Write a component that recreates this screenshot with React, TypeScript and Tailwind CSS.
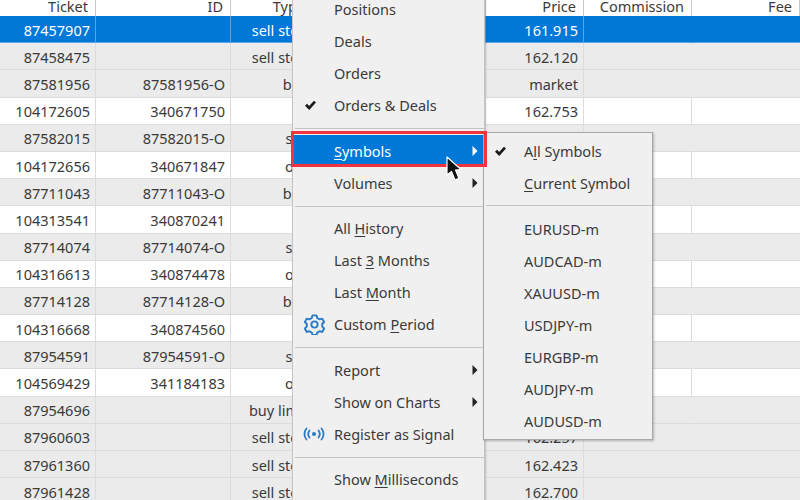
const rows = [
  ["87457907", "", "sell stop", "161.915"],
  ["87458475", "", "sell stop", "162.120"],
  ["87581956", "87581956-O", "buy", "market"],
  ["104172605", "340671750", "in", "162.753"],
  ["87582015", "87582015-O", "sell", ""],
  ["104172656", "340671847", "out", ""],
  ["87711043", "87711043-O", "buy", ""],
  ["104313541", "340870241", "in", ""],
  ["87714074", "87714074-O", "sell", ""],
  ["104316613", "340874478", "out", ""],
  ["87714128", "87714128-O", "buy", ""],
  ["104316668", "340874560", "in", ""],
  ["87954591", "87954591-O", "sell", ""],
  ["104569429", "341184183", "out", ""],
  ["87954696", "", "buy limit", ""],
  ["87960603", "", "sell stop", "162.257"],
  ["87961360", "", "sell stop", "162.423"],
  ["87961428", "", "sell stop", "162.700"],
];

const cols = "grid grid-cols-[96px_135px_82px_1fr_98px_108px_108px]";

function Check() {
  return (
    <svg width="11" height="10" viewBox="0 0 11 10" className="text-[#1c1c1c] -ml-[8px]">
      <path d="M1 4.800 L4.200 8 L10 1.600" fill="none" stroke="currentColor" strokeWidth="2.800" />
    </svg>
  );
}

function Arrow({ white }: { white?: boolean }) {
  return (
    <svg width="6" height="10" viewBox="0 0 6 10" className={white ? "text-white" : "text-[#222]"}>
      <path d="M0.500 0 L5.500 5 L0.500 10 Z" fill="currentColor" />
    </svg>
  );
}

function Gear() {
  return (
    <svg width="21" height="21" viewBox="0 0 24 24" fill="none" stroke="#2a7cc7" strokeWidth="2.200" strokeLinejoin="round">
      <path d="M9.700 1.600h4.600l.8 3 2.700 1.500 3-.8 2.200 3.900-2.200 2.200v3l2.200 2.200-2.200 3.900-3-.8-2.700 1.500-.8 2.800H9.700l-.8-2.800-2.700-1.500-3 .8L1 16.600l2.200-2.200v-3L1 9.200l2.200-3.900 3 .8 2.700-1.500z" />
      <circle cx="12" cy="12" r="3.600" />
    </svg>
  );
}

function SignalIcon() {
  return (
    <svg width="22" height="14" viewBox="0 0 22 14" fill="none" stroke="#2a7cc7" strokeWidth="1.800" strokeLinecap="round">
      <path d="M3.500 1.500 C0.800 4.500 0.800 9.500 3.500 12.500" />
      <path d="M6.500 3.500 C5 5.500 5 8.500 6.500 10.500" />
      <path d="M15.500 3.500 C17 5.500 17 8.500 15.500 10.500" />
      <path d="M18.500 1.500 C21.200 4.500 21.200 9.500 18.500 12.500" />
      <circle cx="11" cy="7" r="2" fill="#2a7cc7" stroke="none" />
    </svg>
  );
}

function Item({ icon, children, arrow, active, inset }: { icon?: React.ReactNode; children: React.ReactNode; arrow?: boolean; active?: boolean; inset?: boolean }) {
  return (
    <div className={`h-8 flex items-center ${active ? "bg-[#0078d7] text-white" : ""}`}>
      <div className={`shrink-0 flex justify-center pl-[1px] ${inset ? "w-[41px]" : "w-[40px]"}`}>{icon}</div>
      <div className="flex-1 whitespace-nowrap">{children}</div>
      {arrow && (
        <div className="w-[12px] shrink-0">
          <Arrow white={active} />
        </div>
      )}
    </div>
  );
}

function Sep({ low }: { low?: boolean }) {
  return (
    <div className={`h-[13.500px] flex items-center pl-[2px] ${low ? "pt-[2px]" : ""}`}>
      <div className="h-[1px] w-full bg-[#c4c4c4]" />
    </div>
  );
}

function U({ children }: { children: React.ReactNode }) {
  return <span className="underline underline-offset-2 decoration-1">{children}</span>;
}

export default function App() {
  return (
    <div className="relative w-[800px] h-[500px] overflow-hidden bg-white text-[14.500px] leading-[20px] text-[#3a3a3a] font-['Noto_Sans',sans-serif]">
      <div className={`${cols} h-[16px] overflow-hidden text-right`}>
        {["Ticket", "ID", "Type", "", "Price", "Commission", "Fee"].map((h, i) => (
          <div key={i} className="border-r border-[#c8c8c8] pr-[7px] h-[20px] -mt-[4px]">
            {h}
          </div>
        ))}
      </div>
      {rows.map((r, i) => {
        const selected = i === 0;
        const white = r[0].startsWith("104");
        const bg = selected ? "bg-[#0078d7] text-white border-[#5da3e0]" : white ? "bg-white border-[#dcdcdc]" : "bg-[#ebebeb] border-[#dcdcdc]";
        return (
          <div key={i} className={`${cols} h-[27.200px] text-right ${bg}`}>
            <div className="border-r border-b border-inherit pr-[5px] pt-[1px] flex items-center justify-end">{r[0]}</div>
            <div className="border-r border-b border-inherit pr-[5px] pt-[1px] flex items-center justify-end">{r[1]}</div>
            <div className="border-r border-b border-inherit pr-[4px] pt-[1px] flex items-center justify-end whitespace-nowrap">{r[2]}</div>
            <div className="border-r border-b border-inherit" />
            <div className="border-r border-b border-inherit pr-[5px] pt-[1px] flex items-center justify-end">{r[3]}</div>
            <div className={`border-r border-b border-inherit ${white ? "" : "border-r-transparent"}`} />
            <div className="border-b border-inherit" />
          </div>
        );
      })}

      {/* main context menu */}
      <div className="absolute left-[292px] -top-[9px] w-[193px] h-[520px] bg-[#f0f0f0] border-x border-[#c4c4c4] pt-[2px] shadow-[1px_1px_2px_rgba(0,0,0,0.15)]">
        <Item inset>Positions</Item>
        <Item inset>Deals</Item>
        <Item inset>Orders</Item>
        <Item inset icon={<Check />}>Orders &amp; Deals</Item>
        <Sep low />
        <Item inset arrow active><U>S</U>ymbols</Item>
        <Item inset arrow>Volumes</Item>
        <Sep low />
        <Item inset>All <U>H</U>istory</Item>
        <Item inset>Last <U>3</U> Months</Item>
        <Item inset>Last <U>M</U>onth</Item>
        <Item inset icon={<Gear />}>Custom <U>P</U>eriod</Item>
        <Sep low />
        <Item inset arrow>Report</Item>
        <Item inset arrow>Show on Charts</Item>
        <Item inset icon={<SignalIcon />}>Register as Signal</Item>
        <Sep low />
        <Item inset>Show <U>M</U>illiseconds</Item>
      </div>

      {/* symbols submenu */}
      <div className="absolute left-[483px] top-[132px] w-[170px] bg-[#f0f0f0] border border-[#a8a8a8] py-[2px] shadow-[1px_1px_2px_rgba(0,0,0,0.25)]">
        <Item icon={<Check />}>A<U>l</U>l Symbols</Item>
        <Item><U>C</U>urrent Symbol</Item>
        <Sep />
        <Item>EURUSD-m</Item>
        <Item>AUDCAD-m</Item>
        <Item>XAUUSD-m</Item>
        <Item>USDJPY-m</Item>
        <Item>EURGBP-m</Item>
        <Item>AUDJPY-m</Item>
        <Item>AUDUSD-m</Item>
      </div>

      {/* red annotation around the active item */}
      <div className="absolute left-[291px] top-[131px] w-[196px] h-[36px] border-[3px] border-[#f5333f]" />

      {/* mouse cursor */}
      <svg className="absolute left-[445px] top-[155px]" width="18" height="28" viewBox="0 0 18 28">
        <path d="M2 2 L2 20 L6.500 16.500 L10 25 L14 23.200 L10.500 15 L16 14.500 Z" fill="#111" stroke="#fff" strokeWidth="1.200" strokeLinejoin="round" />
      </svg>
    </div>
  );
}
